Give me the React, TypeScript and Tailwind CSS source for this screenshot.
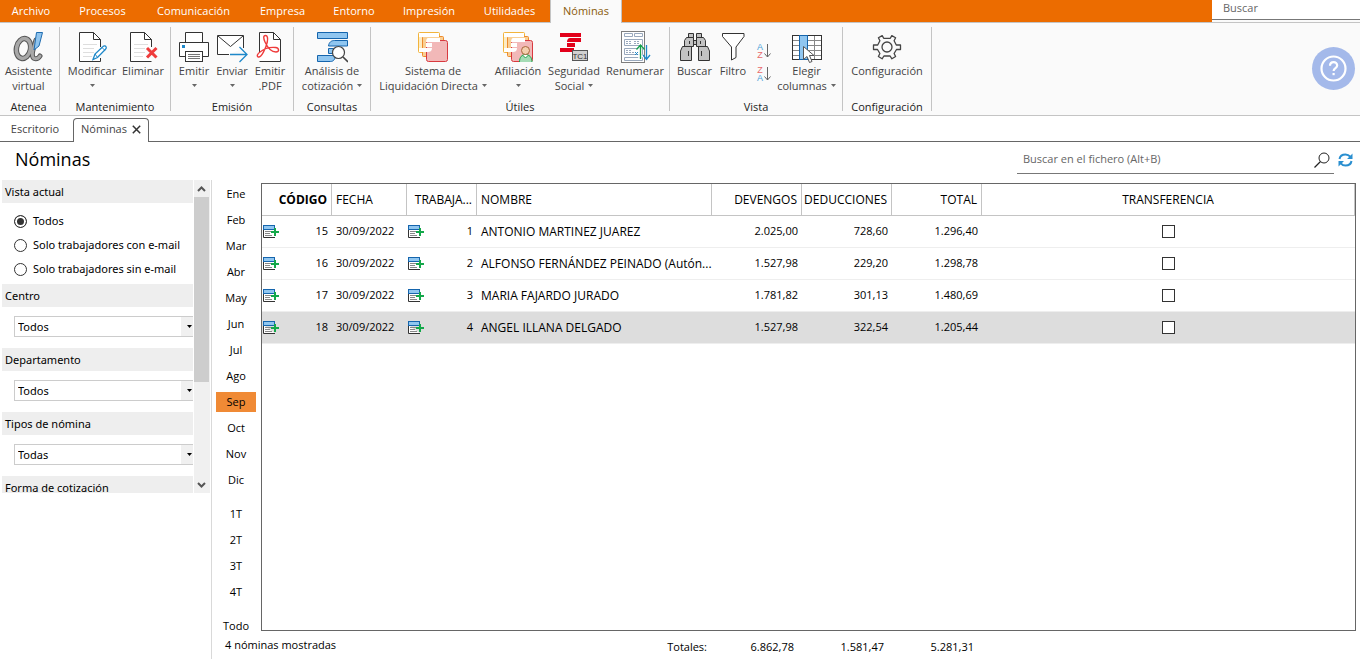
import { useState } from 'react';
import type { ReactNode } from 'react';
import { clsx } from 'clsx';

const menuTabs = [
  { label: 'Archivo', width: 'w-[62px] mr-[2px]' },
  { label: 'Procesos', width: 'w-[77px]' },
  { label: 'Comunicación', width: 'w-[105px]' },
  { label: 'Empresa', width: 'w-[73px]' },
  { label: 'Entorno', width: 'w-[70px]' },
  { label: 'Impresión', width: 'w-20' },
  { label: 'Utilidades', width: 'w-[81px]' },
];

const months = ['Ene', 'Feb', 'Mar', 'Abr', 'May', 'Jun', 'Jul', 'Ago', 'Sep', 'Oct', 'Nov', 'Dic'];
const quarters = ['1T', '2T', '3T', '4T'];

const rows = [
  { code: 15, date: '30/09/2022', worker: 1, name: 'ANTONIO MARTINEZ JUAREZ', gross: '2.025,00', deductions: '728,60', total: '1.296,40' },
  { code: 16, date: '30/09/2022', worker: 2, name: 'ALFONSO FERNÁNDEZ PEINADO (Autón...', gross: '1.527,98', deductions: '229,20', total: '1.298,78' },
  { code: 17, date: '30/09/2022', worker: 3, name: 'MARIA FAJARDO JURADO', gross: '1.781,82', deductions: '301,13', total: '1.480,69' },
  { code: 18, date: '30/09/2022', worker: 4, name: 'ANGEL ILLANA DELGADO', gross: '1.527,98', deductions: '322,54', total: '1.205,44' },
];

const viewOptions = ['Todos', 'Solo trabajadores con e-mail', 'Solo trabajadores sin e-mail'];

function Icon({ children }: { children: ReactNode }) {
  return (
    <svg width="32" height="32" viewBox="0 0 32 32" fill="none" className="shrink-0" aria-hidden="true">
      {children}
    </svg>
  );
}

// Atenea logo: a grey loop with a blue blade
function AteneaIcon() {
  return (
    <Icon>
      <g strokeLinecap="round">
        <ellipse cx="10.500" cy="17.500" rx="7" ry="10" transform="rotate(12 10.500 17.500)" stroke="#555" strokeWidth="5.500" />
        <path d="M23 9c-2 7-4.500 12-3.500 16 .8 3.500 5 4 7.500 0" stroke="#555" strokeWidth="5" />
        <ellipse cx="10.500" cy="17.500" rx="7" ry="10" transform="rotate(12 10.500 17.500)" stroke="#a8a8a8" strokeWidth="3.500" />
        <path d="M23 9c-2 7-4.500 12-3.500 16 .8 3.500 5 4 7.500 0" stroke="#a8a8a8" strokeWidth="3" />
      </g>
      <path d="M23.500 1.500h6L26 15l-5 4z" fill="#8fc4ee" stroke="#1f6cb0" />
    </Icon>
  );
}

function PageLines() {
  return <path d="M7 13.500h14M7 17.500h11M7 21.500h11M7 25.500h9" stroke="#dedede" />;
}

function EditIcon() {
  return (
    <Icon>
      <path d="M24.500 16V8.500l-7-7h-14v29h21V27" fill="#fff" stroke="#333" />
      <path d="M17.500 1.500v7h7" stroke="#333" />
      <PageLines />
      <path d="M17 28.500l2-5.500L27 15.500c1-1 2.500-.6 3 .2.600.8.300 1.800-.5 2.600L21.500 26.500z" fill="#fff" stroke="#1e88c9" strokeWidth="1.300" />
      <path d="M19 23l2.500 3.500M26 16.500l2.800 2.800" stroke="#1e88c9" />
    </Icon>
  );
}

function DeleteIcon() {
  return (
    <Icon>
      <path d="M24.500 16V8.500l-7-7h-14v29h21" fill="#fff" stroke="#333" />
      <path d="M17.500 1.500v7h7" stroke="#333" />
      <PageLines />
      <path d="M20 17l9.500 9.500M29.500 17L20 26.500" stroke="#fafafa" strokeWidth="6" />
      <path d="M20 17l9.500 9.500M29.500 17L20 26.500" stroke="#ef3b3b" strokeWidth="3" />
    </Icon>
  );
}

function PrintIcon() {
  return (
    <Icon>
      <path d="M7.500 11V1.500h17V11" fill="#fff" stroke="#333" />
      <path d="M7 25.500H1.500v-14h29v14H25" fill="#fff" stroke="#333" />
      <rect x="7.500" y="20.500" width="17" height="10" fill="#fff" stroke="#333" />
      <path d="M10 23.500h12M10 25.500h12M10 27.500h12" stroke="#777" />
      <rect x="4" y="14" width="3" height="3" fill="#1e88c9" />
    </Icon>
  );
}

function SendIcon() {
  return (
    <Icon>
      <path d="M13 23.500H1.500v-19h26V17" fill="#fff" stroke="#333" />
      <path d="M2 5l12.500 10.500L27 5" stroke="#333" />
      <path d="M14 23.500h17M23.500 16l7.500 7.500-7.500 7.500" stroke="#1e88c9" strokeWidth="1.300" />
    </Icon>
  );
}

function PdfIcon() {
  return (
    <Icon>
      <path d="M5.500 22V1.500h14l7 7v22h-21" fill="#fff" stroke="#333" />
      <path d="M19.500 1.500v7h7" stroke="#333" />
      <path
        d="M11.500 4.500c-2.500 0-2 3-.5 6.500 2.500 5.500 6.500 10 11 10 3.500 0 3.500-4-.5-4.500-4.500-.5-11 1-15.500 4.500-2.800 2-3.500 4.500-1.700 5 3 .8 7.700-9 9-15 .7-4 .2-6.500-1.800-6.500z"
        stroke="#ef3b3b" strokeWidth="1.400"
      />
    </Icon>
  );
}

function AnalysisIcon() {
  return (
    <Icon>
      <g fill="#90c6f0" stroke="#1565ad">
        <path d="M1.500 1.500h30v6h-30z" />
        <path d="M12.500 15c.5-4 3-5.500 6-5.500h13V15z" />
        <path d="M12.500 17.500h10v5h-10z" />
        <path d="M1.500 24.500h18c-.5 4-2 6-5 6h-13z" />
      </g>
      <circle cx="22.500" cy="21.500" r="6" fill="#fff" stroke="#444" strokeWidth="1.200" />
      <path d="M27 26l5 5" stroke="#444" strokeWidth="1.600" />
    </Icon>
  );
}

function SettlementShapes() {
  return (
    <>
      <rect x="1.500" y="1.500" width="21" height="20" rx="1" fill="#fdecc4" stroke="#f2b43c" />
      <rect x="5.500" y="5.500" width="21" height="20" rx="1" fill="#f9cf94" stroke="#ee8b2c" />
      <rect x="9.500" y="9.500" width="21" height="21" rx="2" fill="#f2b8b8" stroke="#d8393f" />
      <path d="M2 2h20v4H2zM11 7h12v4H9c0-2 1-4 2-4zM9 12h6v4H9zM2 17h13c0 3-2 4-4 4H2z" fill="#fff" />
    </>
  );
}

function SettlementIcon() {
  return <Icon><SettlementShapes /></Icon>;
}

function AffiliationIcon() {
  return (
    <Icon>
      <SettlementShapes />
      <path d="M17.500 31c0-5 2.500-7.500 6-7.500s6.500 2.500 6.500 7.500" fill="#a4dbb4" stroke="#1fa24a" />
      <path d="M20.500 24l3 3 3-3" fill="#fff" stroke="#1fa24a" />
      <circle cx="23.500" cy="19.500" r="4" fill="#f4cfae" stroke="#a9653a" />
    </Icon>
  );
}

function SocialSecurityIcon() {
  return (
    <Icon>
      <path d="M2 2h21v4H2zM12 7h11v4H9c0-2 1-4 3-4zM9 12h8v4H9zM2 17h14v4H2z" fill="#e2001a" />
      <rect x="14.500" y="19.500" width="15" height="10" fill="#d0d0d0" stroke="#555" />
      <text x="22" y="28" fontSize="8" textAnchor="middle" fontFamily="Liberation Sans, sans-serif" fill="#333">TC1</text>
    </Icon>
  );
}

function RenumberIcon() {
  return (
    <Icon>
      <rect x="2.500" y=".5" width="23" height="31" fill="#fff" stroke="#7d7d7d" />
      <g stroke="#9aa9bd">
        <path d="M5.500 2.500h8v3h-8zM15.500 2.500h8v3h-8zM5.500 8.500h18v6h-18zM5.500 17.500h18v6h-18zM5.500 26.500h18v3h-18z" />
        <path d="M7 10.500h6M15 10.500h6M7 12.500h6M15 12.500h6M7 19.500h6M7 21.500h9" strokeDasharray="2 1" />
      </g>
      <path d="M19 15h4v13h-4z" fill="#fff" fillOpacity=".8" />
      <path d="M21.500 28V14.500M17.500 18.500l4-4.500 4 4.500" stroke="#14a04a" strokeWidth="1.300" />
      <path d="M27.500 14v14M24 24l3.500 4.500L31 24" stroke="#1e88c9" strokeWidth="1.300" />
      <path d="M16 21l3 3M19 21l-3 3" stroke="#1e88c9" />
    </Icon>
  );
}

function BinocularsIcon() {
  return (
    <Icon>
      <g fill="#c2c2c2" stroke="#333">
        <path d="M9.500 2.500h5v4h-5zM17.500 2.500h5v4h-5z" />
        <path d="M14.500 9.500h3v4h-3z" />
        <path d="M7.500 6.500h7v9h-9v-6zM17.500 6.500h7l2 3v6h-9z" />
        <path d="M3.500 15.500h9v14h-11V20zM19.500 15.500h9l2 4.500v9.500h-11z" />
        <path d="M10.500 10v3M21.500 10v3M9.500 20v5M22.500 20v5" />
      </g>
    </Icon>
  );
}

function FilterIcon() {
  return (
    <Icon>
      <path d="M5.500 2.500h21.500v3l-8 10.500v10.500l-4.500 2.500V16l-9-10.500z" fill="#fff" stroke="#333" />
    </Icon>
  );
}

function SortIcon({ first, second, firstColor, secondColor }: { first: string; second: string; firstColor: string; secondColor: string }) {
  return (
    <svg width="16" height="16" viewBox="0 0 16 16" fill="none" aria-hidden="true">
      <text x="4" y="7" fontSize="9" textAnchor="middle" fontFamily="Liberation Sans, sans-serif" fill={firstColor}>{first}</text>
      <text x="4" y="15" fontSize="9" textAnchor="middle" fontFamily="Liberation Sans, sans-serif" fill={secondColor}>{second}</text>
      <path d="M11.500 1v13M8.500 10.500l3 3.500 3-3.500" stroke="#666" />
    </svg>
  );
}

function ColumnsIcon() {
  return (
    <Icon>
      <rect x="1.500" y="4.500" width="29" height="24" fill="#fff" />
      <path d="M2 9.500h28M2 14.500h28M2 19.500h28M2 24.500h28" stroke="#888" />
      <path d="M16.500 5v23M23.500 5v23" stroke="#888" />
      <rect x="1.500" y="4.500" width="29" height="24" stroke="#333" />
      <rect x="8.500" y="4.500" width="8" height="24" fill="#90c6f0" stroke="#1565ad" />
      <path d="M12.500 15.500v13l3.500-3 2.500 6 2.500-1-2.500-6H23z" fill="#fff" stroke="#555" />
    </Icon>
  );
}

function GearIcon() {
  return (
    <Icon>
      <path
        d="M12.700 7.300l-1.500-2.700-3.800 2.200 1.500 2.900-2.200 4.300H2.500v4.500h4l2.400 4-1.500 3 3.700 2.300 1.800-2.800h6.200l1.800 2.800 3.700-2.300-1.500-3 2.400-4h4V14h-4.200l-2.200-4.300 1.500-2.900-3.800-2.200-1.500 2.700z"
        stroke="#444" strokeWidth="1.300" strokeLinejoin="round"
      />
      <circle cx="16" cy="16" r="5" stroke="#444" strokeWidth="1.300" />
    </Icon>
  );
}

function AddRecordIcon() {
  return (
    <svg width="16" height="14" viewBox="0 0 16 14" fill="none" className="shrink-0" aria-hidden="true">
      <path d="M.5 4v8.500H12" fill="#fff" stroke="#333" />
      <rect x=".5" y=".5" width="11" height="4" fill="#90c6f0" stroke="#1565ad" />
      <path d="M2 6.500h6M2 8.500h5M2 10.500h7" stroke="#888" />
      <path d="M12 3v8M8 7h8" stroke="#14a84a" strokeWidth="2" />
    </svg>
  );
}

function Caret() {
  return <svg width="5" height="3" viewBox="0 0 5 3" className="inline-block shrink-0" aria-hidden="true"><path d="M0 0h5L2.500 3z" fill="#666" /></svg>;
}

interface ToolProps {
  icon: ReactNode;
  width: string;
  lines: string[];
  caret?: boolean;
}

function Tool({ icon, width, lines, caret }: ToolProps) {
  return (
    <button className={clsx('flex flex-col items-center whitespace-nowrap text-[#444] hover:bg-[#ececec]', width)}>
      {icon}
      <span className="leading-[15px]">{lines[0]}</span>
      <span className="flex h-[15px] items-center gap-1 leading-[15px]">
        {lines[1]}
        {caret && <Caret />}
      </span>
    </button>
  );
}

function Group({ label, width, children }: { label: string; width: string; children: ReactNode }) {
  return (
    <>
      <section className={clsx('flex shrink-0 flex-col items-center', width)}>
        <div className="flex h-[72px] items-start pt-1">{children}</div>
        <h2 className="leading-[15px] text-[#222]">{label}</h2>
      </section>
      <div className="h-[84px] w-px shrink-0 bg-[#c4c4c4]" />
    </>
  );
}

function Ribbon() {
  return (
    <div className="flex h-[94px] border-y border-[#c4c4c4] bg-[#fafafa] pt-1">
      <Group label="Atenea" width="w-[59px] pr-[2px]">
        <Tool icon={<AteneaIcon />} width="w-[57px]" lines={['Asistente', 'virtual']} />
      </Group>
      <Group label="Mantenimiento" width="w-[110px]">
        <Tool icon={<EditIcon />} width="w-14" lines={['Modificar']} caret />
        <Tool icon={<DeleteIcon />} width="w-[46px]" lines={['Eliminar']} />
      </Group>
      <Group label="Emisión" width="w-[122px]">
        <Tool icon={<PrintIcon />} width="w-[38px]" lines={['Emitir']} caret />
        <Tool icon={<SendIcon />} width="w-[38px]" lines={['Enviar']} caret />
        <Tool icon={<PdfIcon />} width="w-[38px]" lines={['Emitir', '.PDF']} />
      </Group>
      <Group label="Consultas" width="w-[76px]">
        <Tool icon={<AnalysisIcon />} width="w-[74px]" lines={['Análisis de', 'cotización']} caret />
      </Group>
      <Group label="Útiles" width="w-[298px]">
        <Tool icon={<SettlementIcon />} width="w-[118px]" lines={['Sistema de', 'Liquidación Directa']} caret />
        <Tool icon={<AffiliationIcon />} width="w-[52px]" lines={['Afiliación']} caret />
        <Tool icon={<SocialSecurityIcon />} width="w-[60px]" lines={['Seguridad', 'Social']} caret />
        <Tool icon={<RenumberIcon />} width="w-[62px]" lines={['Renumerar']} />
      </Group>
      <Group label="Vista" width="w-[172px]">
        <Tool icon={<BinocularsIcon />} width="w-10" lines={['Buscar']} />
        <Tool icon={<FilterIcon />} width="w-[37px]" lines={['Filtro']} />
        <div className="flex w-6 flex-col items-center gap-[7px] pt-3">
          <button aria-label="Orden ascendente"><SortIcon first="A" second="Z" firstColor="#4a9fd8" secondColor="#e86a6a" /></button>
          <button aria-label="Orden descendente"><SortIcon first="Z" second="A" firstColor="#e86a6a" secondColor="#4a9fd8" /></button>
        </div>
        <Tool icon={<ColumnsIcon />} width="w-[62px]" lines={['Elegir', 'columnas']} caret />
      </Group>
      <Group label="Configuración" width="w-[88px]">
        <Tool icon={<GearIcon />} width="w-20" lines={['Configuración']} />
      </Group>
      <button aria-label="Ayuda" className="mt-5 mr-[5px] ml-auto size-[43px] rounded-full bg-[#a4b9ea]">
        <svg width="43" height="43" viewBox="0 0 43 43" fill="none" stroke="#fff" aria-hidden="true">
          <circle cx="21.500" cy="21.500" r="12" strokeWidth="2.200" />
          <path d="M18 18.800c0-2.200 1.600-3.600 3.600-3.600s3.600 1.400 3.600 3.300c0 2.500-3.600 2.700-3.600 5.500" strokeWidth="2.200" />
          <path d="M21.600 26v2.200" strokeWidth="2.200" />
        </svg>
      </button>
    </div>
  );
}

function FilterSelect({ id, label, value }: { id: string; label: string; value: string }) {
  return (
    <div className="pb-[11px]">
      <label htmlFor={id} className="mb-[9px] block h-[23px] bg-[#eee] pl-[3px] leading-[23px]">{label}</label>
      <div className="relative ml-3">
        <select id={id} defaultValue={value}
          className="block h-[21px] w-full appearance-none border border-r-0 border-[#ccc] bg-white pl-[3px] leading-[19px]">
          <option>{value}</option>
        </select>
        <span className="pointer-events-none absolute inset-y-px right-0 flex w-3 items-center justify-center bg-[#f0f0f0]">
          <svg width="5" height="3" viewBox="0 0 5 3" className="ml-1" aria-hidden="true"><path d="M0 0h5L2.500 3z" fill="#000" /></svg>
        </span>
      </div>
    </div>
  );
}

function Sidebar() {
  const [view, setView] = useState(viewOptions[0]);

  return (
    <aside className="w-[212px] shrink-0 border-r border-[#d9d9d9] pl-[2px] font-['Noto_Sans','Open_Sans',sans-serif]">
      <div className="flex h-[313px]">
        <div className="w-[191px] overflow-hidden">
          <fieldset className="pb-[3px]">
            <legend className="mb-[6px] block h-[23px] w-full bg-[#eee] pl-[3px] leading-[23px]">Vista actual</legend>
            {viewOptions.map(option => (
              <label key={option} className="flex h-6 items-center gap-[6px] pl-3 whitespace-nowrap">
                <input type="radio" name="view" checked={view === option} onChange={() => setView(option)}
                  className="size-[13px] appearance-none rounded-full border border-[#333] bg-white checked:bg-[#333] checked:shadow-[inset_0_0_0_2px_#fff]" />
                {option}
              </label>
            ))}
          </fieldset>
          <FilterSelect id="centro" label="Centro" value="Todos" />
          <FilterSelect id="departamento" label="Departamento" value="Todos" />
          <FilterSelect id="tipos" label="Tipos de nómina" value="Todas" />
          <h3 className="h-[23px] bg-[#eee] pl-[3px] leading-[23px]">Forma de cotización</h3>
        </div>
        <div className="ml-px flex w-4 flex-col justify-between bg-[#f0f0f0]">
          <div>
            <svg width="15" height="17" viewBox="0 0 15 17" fill="none" aria-hidden="true"><path d="M4 11l3.500-3.500L11 11" stroke="#555" strokeWidth="2" /></svg>
            <div className="h-[185px] w-[15px] bg-[#cdcdcd]" />
          </div>
          <svg width="15" height="17" viewBox="0 0 15 17" fill="none" aria-hidden="true"><path d="M4 7l3.500 3.500L11 7" stroke="#555" strokeWidth="2" /></svg>
        </div>
      </div>
    </aside>
  );
}

function PeriodPicker() {
  const [period, setPeriod] = useState('Sep');
  const item = (label: string) => (
    <button key={label} onClick={() => setPeriod(label)}
      className={clsx('h-5 w-10 leading-5', period === label && 'bg-[#f08a35]')}>
      {label}
    </button>
  );

  return (
    <nav className="flex w-[49px] shrink-0 flex-col items-start gap-[14px] pt-1 pl-1">
      <div className="flex flex-col gap-[6px]">{months.map(item)}</div>
      <div className="flex flex-col gap-[6px]">{quarters.map(item)}</div>
      {item('Todo')}
    </nav>
  );
}

function PayrollTable() {
  const [selected, setSelected] = useState(18);
  const th = 'h-8 border-r border-b border-[#c4c4c4] font-normal';

  return (
    <div className="mt-[3px] mr-1 mb-[5px] min-w-0 flex-1 border border-[#666]">
      <table className="w-full table-fixed border-separate border-spacing-0 whitespace-nowrap">
        <colgroup>
          <col className="w-[70px]" />
          <col className="w-[75px]" />
          <col className="w-[70px]" />
          <col className="w-[235px]" />
          <col className="w-[90px]" />
          <col className="w-[90px]" />
          <col className="w-[90px]" />
          <col />
        </colgroup>
        <thead className="text-xs">
          <tr>
            <th className="h-8 border-r border-b border-[#c4c4c4] pr-1 text-right font-bold">CÓDIGO</th>
            <th className={clsx(th, 'pl-1 text-left')}>FECHA</th>
            <th className={clsx(th, 'pr-1 text-right')}>TRABAJA...</th>
            <th className={clsx(th, 'pl-1 text-left')}>NOMBRE</th>
            <th className={clsx(th, 'pr-1 text-right')}>DEVENGOS</th>
            <th className={clsx(th, 'pr-1 text-right')}>DEDUCCIONES</th>
            <th className={clsx(th, 'pr-1 text-right')}>TOTAL</th>
            <th className={clsx(th, 'text-center')}>TRANSFERENCIA</th>
          </tr>
        </thead>
        <tbody>
          {rows.map(row => (
            <tr key={row.code} onClick={() => setSelected(row.code)}
              className={clsx('[&>td]:h-8 [&>td]:border-b [&>td]:border-[#eee]', selected === row.code && 'bg-[#ddd]')}>
              <td className="pr-1 pl-px">
                <div className="flex items-center justify-between"><AddRecordIcon />{row.code}</div>
              </td>
              <td className="pl-1">{row.date}</td>
              <td className="pr-1 pl-px">
                <div className="flex items-center justify-between"><AddRecordIcon />{row.worker}</div>
              </td>
              <td className="pl-1 text-xs">{row.name}</td>
              <td className="pr-1 text-right">{row.gross}</td>
              <td className="pr-1 text-right">{row.deductions}</td>
              <td className="pr-1 text-right">{row.total}</td>
              <td>
                <input type="checkbox" aria-label={`Transferencia ${row.code}`}
                  className="mx-auto block size-[13px] appearance-none border border-[#333] bg-white checked:bg-[#333]" />
              </td>
            </tr>
          ))}
        </tbody>
      </table>
    </div>
  );
}

export default function App() {
  return (
    <div className="flex min-h-screen flex-col bg-white font-['Open_Sans','Noto_Sans',sans-serif] text-[11px] text-black">
      <header>
        <div className="flex h-[22px] bg-[#ec6c00] text-white">
          {menuTabs.map(tab => (
            <button key={tab.label} className={clsx('shrink-0 leading-[22px]', tab.width)}>{tab.label}</button>
          ))}
          <button className="relative z-10 h-[23px] w-[72px] shrink-0 border-x border-[#c4c4c4] bg-[#fafafa] pb-px leading-[22px] text-[#8a5a0a]">Nóminas</button>
          <div className="ml-auto w-[148px] bg-[#fafafa]">
            <input aria-label="Buscar" placeholder="Buscar"
              className="block h-5 w-full border-b border-[#777] bg-white pb-1 pl-[11px] leading-[15px] outline-none placeholder:text-[#666]" />
          </div>
        </div>
        <Ribbon />
      </header>

      <div className="flex h-[26px] items-end text-[#444]">
        <button className="h-6 w-[73px] border-b border-[#666] pr-[3px] pb-px leading-5">Escritorio</button>
        <div className="flex h-6 w-[76px] items-center justify-center gap-[5px] rounded-t-[4px] border border-b-0 border-[#666] pb-[2px]">
          <button>Nóminas</button>
          <button aria-label="Cerrar">
            <svg width="9" height="9" viewBox="0 0 9 9" aria-hidden="true"><path d="M.8.8l7.400 7.400M8.200.8L.8 8.200" stroke="#333" strokeWidth="1.500" /></svg>
          </button>
        </div>
        <div className="h-6 flex-1 border-b border-[#666]" />
      </div>

      <div className="flex h-[38px] justify-between pr-[7px] pl-[15px]">
        <h1 className="text-lg leading-[34px]">Nóminas</h1>
        <div className="flex items-center gap-1 pb-[2px]">
          <div className="flex h-7 w-[317px] items-center border-b border-[#777] pr-1">
            <input aria-label="Buscar en el fichero" placeholder="Buscar en el fichero (Alt+B)"
              className="min-w-0 flex-1 pl-[6px] outline-none placeholder:text-[#666]" />
            <svg width="16" height="16" viewBox="0 0 16 16" fill="none" stroke="#222" aria-hidden="true">
              <circle cx="10" cy="6" r="5" /><path d="M6.500 9.500l-6 6" strokeWidth="1.300" />
            </svg>
          </div>
          <button aria-label="Actualizar">
            <svg width="15" height="14" viewBox="0 0 15 14" fill="none" aria-hidden="true">
              <path d="M1.500 6C2 3 4.500 1.500 7.500 1.500c2 0 3.500.8 4.700 2.200M13.500 8c-.5 3-3 4.500-6 4.500-2 0-3.500-.8-4.700-2.200" stroke="#2a8fd0" strokeWidth="2" />
              <path d="M14.500.5V6H9zM.5 13.500V8H6z" fill="#2a8fd0" />
            </svg>
          </button>
        </div>
      </div>

      <main className="flex flex-1">
        <Sidebar />
        <div className="flex min-w-0 flex-1 flex-col">
          <div className="flex flex-1">
            <PeriodPicker />
            <PayrollTable />
          </div>
          <footer className="flex h-[23px] leading-[18px] whitespace-nowrap">
            <p className="w-[415px] pl-[13px]">4 nóminas mostradas</p>
            <div className="flex pt-[2px] text-right">
              <span className="w-20">Totales:</span>
              <span className="w-[87px]">6.862,78</span>
              <span className="w-[90px]">1.581,47</span>
              <span className="w-[90px]">5.281,31</span>
            </div>
          </footer>
        </div>
      </main>
    </div>
  );
}
